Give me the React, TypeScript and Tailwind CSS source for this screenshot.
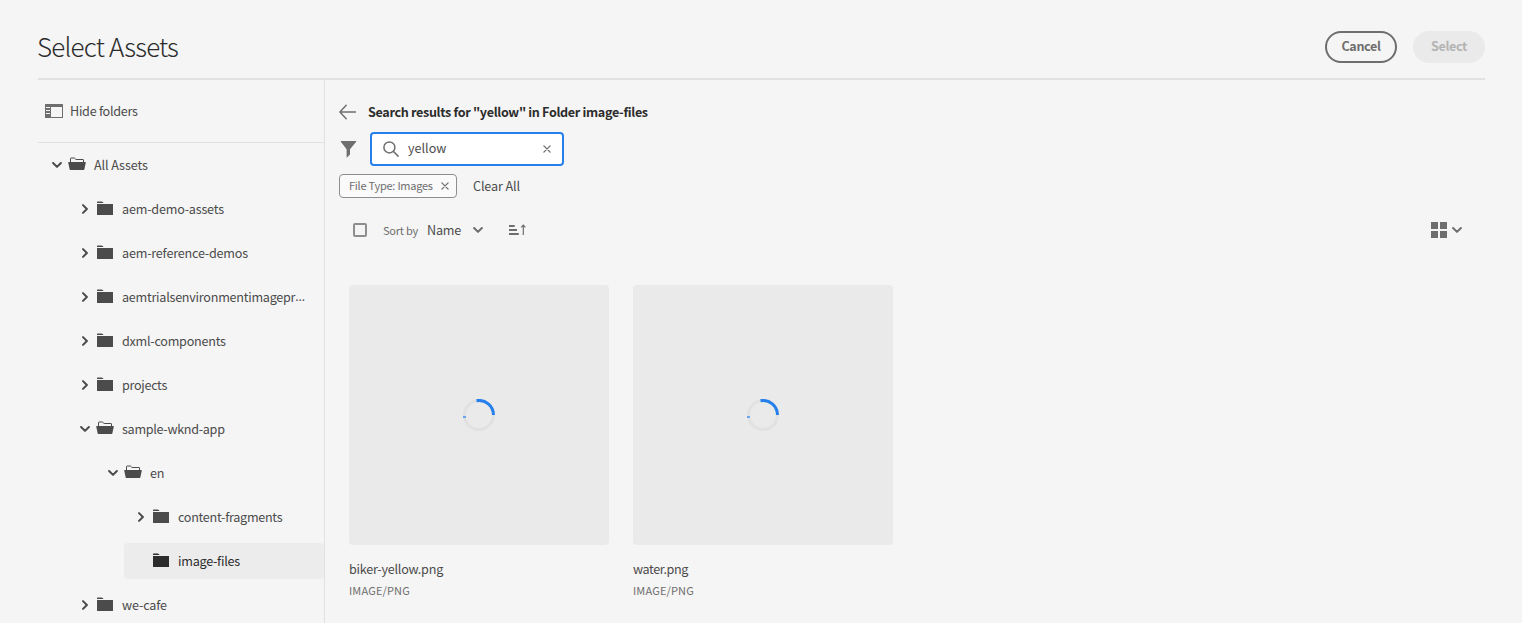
import React from "react";

type NodeKind = "open" | "closed" | "leaf";

interface TreeItem {
  label: string;
  kind: NodeKind;
  indent: string;
  tracking: string;
  truncated?: boolean;
}

const tree: TreeItem[] = [
  { label: "All Assets", kind: "open", indent: "ml-0", tracking: "tracking-[-0.1px]" },
  { label: "aem-demo-assets", kind: "closed", indent: "ml-7", tracking: "tracking-[-0.2px]" },
  { label: "aem-reference-demos", kind: "closed", indent: "ml-7", tracking: "tracking-[-0.2px]" },
  { label: "aemtrialsenvironmentimagepr", kind: "closed", indent: "ml-7", tracking: "tracking-[-0.25px]", truncated: true },
  { label: "dxml-components", kind: "closed", indent: "ml-7", tracking: "tracking-[-0.25px]" },
  { label: "projects", kind: "closed", indent: "ml-7", tracking: "tracking-[-0.3px]" },
  { label: "sample-wknd-app", kind: "open", indent: "ml-7", tracking: "tracking-[-0.3px]" },
  { label: "en", kind: "open", indent: "ml-14", tracking: "tracking-[-0.3px]" },
  { label: "content-fragments", kind: "closed", indent: "ml-[84px]", tracking: "tracking-[-0.28px]" },
  { label: "image-files", kind: "leaf", indent: "ml-[86px]", tracking: "tracking-[-0.25px]" },
  { label: "we-cafe", kind: "closed", indent: "ml-7", tracking: "tracking-[-0.13px]" },
];

function Chevron({ right = false, className = "" }: { right?: boolean; className?: string }) {
  return (
    <svg viewBox="0 0 10 10" className={`h-[10px] w-[10px] shrink-0 ${className}`} fill="none" stroke="currentColor" strokeWidth="2" strokeLinecap="round" strokeLinejoin="round">
      <path d={right ? "M3 1.1 6.9 5 3 8.9" : "M1.1 3 5 6.9 8.9 3"} />
    </svg>
  );
}

function Folder() {
  return (
    <svg viewBox="0 0 18 18" className="h-[18px] w-[18px] shrink-0" fill="currentColor">
      <path d="M1 3V2.1A.6.6 0 0 1 1.6 1.5H5.8a1 1 0 0 1 .8.4L7.7 3ZM1 4H16.7a.3.3 0 0 1 .3.3V14.7a.3.3 0 0 1-.3.3H1.3a.3.3 0 0 1-.3-.3Z" />
    </svg>
  );
}

function FolderOpen() {
  return (
    <svg viewBox="0 0 18 18" className="h-[18px] w-[18px] shrink-0">
      <path d="M2.5 6.5V2.5a.5.5 0 0 1 .5-.5H6.4L8.1 3.5H15a.5.5 0 0 1 .5.5V6.5" fill="none" stroke="currentColor" strokeWidth="1" />
      <path d="M.7 6H17.3a.5.5 0 0 1 .5.6L16.3 13.6a.5.5 0 0 1-.5.4H2.2a.5.5 0 0 1-.5-.4L.2 6.6A.5.5 0 0 1 .7 6Z" fill="currentColor" />
    </svg>
  );
}

function Cross({ className = "" }: { className?: string }) {
  return (
    <svg viewBox="0 0 8 8" className={`h-2 w-2 shrink-0 ${className}`} fill="none" stroke="currentColor" strokeWidth="1.3" strokeLinecap="round">
      <path d="M.9.9 7.1 7.1M7.1.9.9 7.1" />
    </svg>
  );
}

function Spinner() {
  return (
    <svg viewBox="0 0 32 32" className="h-8 w-8" fill="none" strokeWidth="3">
      <circle cx="16" cy="16" r="14.5" stroke="#e1e1e1" />
      <path d="M13.5 1.7A14.5 14.5 0 0 1 30.5 16" stroke="#2680eb" />
      <path d="M1.4 17.1 1.5 18.8" stroke="#5a9cf0" />
    </svg>
  );
}

function TreeRow({ item }: { item: TreeItem }) {
  const selected = item.kind === "leaf";
  return (
    <div className={`mb-2 flex h-9 items-center rounded ${item.indent} ${selected ? "bg-[#ececec] pl-3 text-[#2c2c2c]" : "pl-[14px] text-[#4b4b4b]"}`}>
      <span className="mr-[6px] w-[10px]">{!selected && <Chevron right={item.kind === "closed"} />}</span>
      <span className="mr-2">{item.kind === "open" ? <FolderOpen /> : <Folder />}</span>
      <span className={`flex h-5 items-center whitespace-nowrap leading-5 ${item.tracking}`}>
        {item.label}
        {item.truncated && <span className="font-['Open_Sans',sans-serif]">…</span>}
      </span>
    </div>
  );
}

function AssetCard({ name, type, tracking }: { name: string; type: string; tracking: string }) {
  return (
    <div className="w-[260px]">
      <div className="flex h-[260px] items-center justify-center rounded bg-[#eaeaea]">
        <Spinner />
      </div>
      <div className={`mt-[14px] h-5 leading-5 ${tracking}`}>{name}</div>
      <div className="mt-[3px] h-4 text-[11px] leading-4 tracking-[0.15px] text-[#6e6e6e]">{type}</div>
    </div>
  );
}

export default function App() {
  return (
    <div className="flex h-[623px] w-[1522px] flex-col overflow-hidden bg-[#f5f5f5] pl-[38px] pr-[37px] font-['Noto_Sans_CJK_SC',sans-serif] text-[12.6px] text-[#4b4b4b]">
      <header className="flex h-20 shrink-0 items-center justify-between border-b-2 border-[#e1e1e1] pt-4">
        <h1 className="-ml-px mb-[2px] text-[26px] font-light leading-8 tracking-[-0.8px] text-[#2c2c2c]">Select Assets</h1>
        <div className="flex gap-4 font-bold tracking-[-0.38px]">
          <button className="flex h-8 w-[72px] items-center justify-center rounded-full border-2 border-[#6e6e6e] pb-[2px] text-[#6e6e6e]">Cancel</button>
          <button className="flex h-8 w-[72px] items-center justify-center rounded-full bg-[#eaeaea] pb-[2px] text-[#b3b3b3]">Select</button>
        </div>
      </header>

      <div className="flex min-h-0 flex-1">
        <aside className="w-[287px] shrink-0 overflow-hidden border-r border-[#e1e1e1]">
          <div className="flex h-[63px] items-center gap-[7px] border-b border-[#e1e1e1] pl-[7px] tracking-[-0.27px]">
            <svg viewBox="0 0 18 14" className="h-[14px] w-[18px]" fill="#6e6e6e">
              <path fillRule="evenodd" d="M.5 0H17.5a.5.5 0 0 1 .5.5V13.5a.5.5 0 0 1-.5.5H.5a.5.5 0 0 1-.5-.5V.5A.5.5 0 0 1 .5 0ZM6 3V13H17V3ZM1 3V4H5V3ZM1 6V7H5V6ZM1 9V10H5V9Z" />
            </svg>
            <span>Hide folders</span>
          </div>
          <nav className="pt-1">
            {tree.map((item) => (
              <TreeRow key={item.label} item={item} />
            ))}
          </nav>
        </aside>

        <main className="flex-1 pl-[14px] pt-4">
          <div className="flex h-8 items-center">
            <svg viewBox="0 0 18 16" className="h-4 w-[18px]" fill="none" stroke="#6e6e6e" strokeWidth="1.4" strokeLinecap="round" strokeLinejoin="round">
              <path d="M16.5 8H.9M7.2 1.3.9 8 7.2 14.7" />
            </svg>
            <h2 className="ml-[11px] font-bold tracking-[-0.33px] text-[#2c2c2c]">Search results for "yellow" in Folder image-files</h2>
          </div>

          <div className="mt-1 flex h-[34px] items-center">
            <svg viewBox="0 0 18 18" className="h-[18px] w-[18px]" fill="#6e6e6e">
              <path d="M2.2 1H16.8a.5.5 0 0 1 .4.8L11 9.2V14.6L8.2 17.2a.3.3 0 0 1-.6-.2V9.2L1.8 1.8A.5.5 0 0 1 2.2 1Z" />
            </svg>
            <div className="ml-[13px] flex h-[34px] w-[194px] items-center rounded border-2 border-[#2680eb] bg-white pl-[11px] pr-[11px]">
              <svg viewBox="0 0 16 16" className="h-4 w-4" fill="none" stroke="#6e6e6e" strokeWidth="1.5" strokeLinecap="round">
                <circle cx="6.4" cy="6.4" r="5.5" />
                <path d="M10.5 10.5 15.1 15.1" />
              </svg>
              <span className="mb-[2px] ml-[9px] flex-1">yellow</span>
              <Cross className="text-[#6e6e6e]" />
            </div>
          </div>

          <div className="mt-2 flex h-6 items-center">
            <div className="flex h-6 w-[118px] items-center justify-between rounded border border-[#8e8e8e] bg-[#fafafa] pl-[9px] pr-[7px] text-[11px] tracking-[-0.25px] text-[#6e6e6e]">
              <span className="whitespace-nowrap pb-[2px]">File Type: Images</span>
              <Cross />
            </div>
            <span className="ml-4 tracking-[-0.12px]">Clear All</span>
          </div>

          <div className="mt-4 flex h-8 items-center pr-[23px]">
            <span className="ml-[14px] h-[14px] w-[14px] rounded-[2px] border-2 border-[#8e8e8e]" />
            <span className="ml-4 w-11 text-[11px] tracking-[-0.23px] text-[#6e6e6e]">Sort by</span>
            <span className="w-[46px] tracking-[-0.2px]">Name</span>
            <Chevron className="text-[#6e6e6e]" />
            <svg viewBox="0 0 18 12" className="ml-[26px] h-3 w-[18px]" fill="none" stroke="#6e6e6e">
              <path d="M0 2H5.7M0 6H8M0 10H9.8" strokeWidth="1.8" />
              <path d="M14.3 11V1.5M12.2 3.4 14.3 1.2 16.4 3.4" strokeWidth="1.2" />
            </svg>
            <div className="ml-auto flex items-center gap-[5px] text-[#6e6e6e]">
              <svg viewBox="0 0 16 16" className="h-4 w-4" fill="currentColor">
                <path d="M0 0H7V7H0ZM9 0H16V7H9ZM0 9H7V16H0ZM9 9H16V16H9Z" />
              </svg>
              <Chevron />
            </div>
          </div>

          <div className="ml-[10px] mt-[39px] flex gap-6">
            <AssetCard name="biker-yellow.png" type="IMAGE/PNG" tracking="tracking-[-0.23px]" />
            <AssetCard name="water.png" type="IMAGE/PNG" tracking="tracking-[-0.4px]" />
          </div>
        </main>
      </div>
    </div>
  );
}
